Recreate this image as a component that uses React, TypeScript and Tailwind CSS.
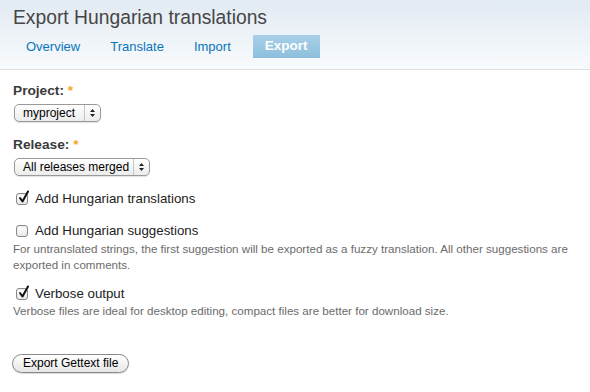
import React from 'react'

const BODY = { fontFamily: '"Liberation Sans", Arial, sans-serif' }

function Check({ checked }: { checked?: boolean }) {
  return (
    <span className="relative inline-flex h-[12px] w-[12px] shrink-0 rounded-[3px] border border-[#8a8a8a] bg-gradient-to-b from-white to-[#e8e8e8] shadow-[inset_0_1px_1px_rgba(0,0,0,0.08)]">
      {checked && (
        <svg className="absolute -top-[4px] left-[1px]" width="12" height="14" viewBox="0 0 12 14">
          <path d="M2 8 L4.5 11.5 L10 1.5" fill="none" stroke="#111" strokeWidth="2" strokeLinecap="round" strokeLinejoin="round" />
        </svg>
      )}
    </span>
  )
}

function Select({ label, width }: { label: string; width: string }) {
  return (
    <div className={`flex h-[18px] items-stretch rounded-[5px] border border-[#9a9a9a] bg-gradient-to-b from-white to-[#ececec] shadow-[0_1px_1px_rgba(0,0,0,0.12)] ${width}`}>
      <span className="flex flex-1 items-center pl-[8px] text-[12px] leading-[16px] text-black">{label}</span>
      <span className="flex w-[16px] flex-col items-center justify-center gap-[2px] border-l border-[#c4c4c4]">
        <svg width="5" height="3" viewBox="0 0 5 3"><path d="M0 3 L2.5 0 L5 3 Z" fill="#222" /></svg>
        <svg width="5" height="3" viewBox="0 0 5 3"><path d="M0 0 L2.5 3 L5 0 Z" fill="#222" /></svg>
      </span>
    </div>
  )
}

export default function App() {
  const tabs = ['Overview', 'Translate', 'Import']
  return (
    <div className="h-[392px] w-[590px] overflow-hidden bg-white" style={BODY}>
      {/* header */}
      <div className="h-[70px] border-b border-[#e0e0e0] bg-gradient-to-b from-[#e2eaf2] to-[#f8fbfd] pl-[13px] pt-[6px]">
        <h1 className="text-[19.3px] leading-[24px] text-[#464646]">Export Hungarian translations</h1>
        <div className="-ml-[2px] mt-[5px] flex items-stretch text-[13px]">
          {tabs.map(t => (
            <span key={t} className="flex h-[23px] items-center px-[15px] text-[#0b74bb]">{t}</span>
          ))}
          <span className="ml-[7px] flex h-[23px] items-center bg-gradient-to-b from-[#a9d0e7] to-[#8cbfdd] px-[12px] text-[13.5px] font-bold text-white">Export</span>
        </div>
      </div>

      <div className="px-[13px] pt-[13px]">
        <div className="text-[13.7px] font-bold leading-[16px] text-[#3a3a3a]">
          Project: <span className="text-[#f5a623]">*</span>
        </div>
        <div className="mt-[5px] pl-[1px]"><Select label="myproject" width="w-[87px]" /></div>

        <div className="mt-[15px] text-[13.7px] font-bold leading-[16px] text-[#3a3a3a]">
          Release: <span className="text-[#f5a623]">*</span>
        </div>
        <div className="mt-[5px] pl-[1px]"><Select label="All releases merged" width="w-[136px]" /></div>

        <label className="mt-[15px] flex h-[16px] items-center gap-[7px] pl-[3px] text-[13.3px] text-[#222]">
          <Check checked /> Add Hungarian translations
        </label>

        <label className="mt-[16px] flex h-[16px] items-center gap-[7px] pl-[3px] text-[13.3px] text-[#222]">
          <Check /> Add Hungarian suggestions
        </label>
        <p className="mt-[2px] text-[11.6px] leading-[16px] text-[#6b6b6b]">
          For untranslated strings, the first suggestion will be exported as a fuzzy translation. All other suggestions are exported in comments.
        </p>

        <label className="mt-[13px] flex h-[16px] items-center gap-[7px] pl-[3px] text-[13.3px] text-[#222]">
          <Check checked /> Verbose output
        </label>
        <p className="mt-[1px] text-[11.6px] leading-[16px] text-[#6b6b6b]">
          Verbose files are ideal for desktop editing, compact files are better for download size.
        </p>

        <button className="-ml-[1px] mt-[35px] h-[19px] rounded-full border border-[#8a8a8a] bg-gradient-to-b from-white to-[#e6e6e6] px-[10px] text-[12px] leading-[17px] text-black shadow-[0_1px_1px_rgba(0,0,0,0.15)]">
          Export Gettext file
        </button>
      </div>
    </div>
  )
}
